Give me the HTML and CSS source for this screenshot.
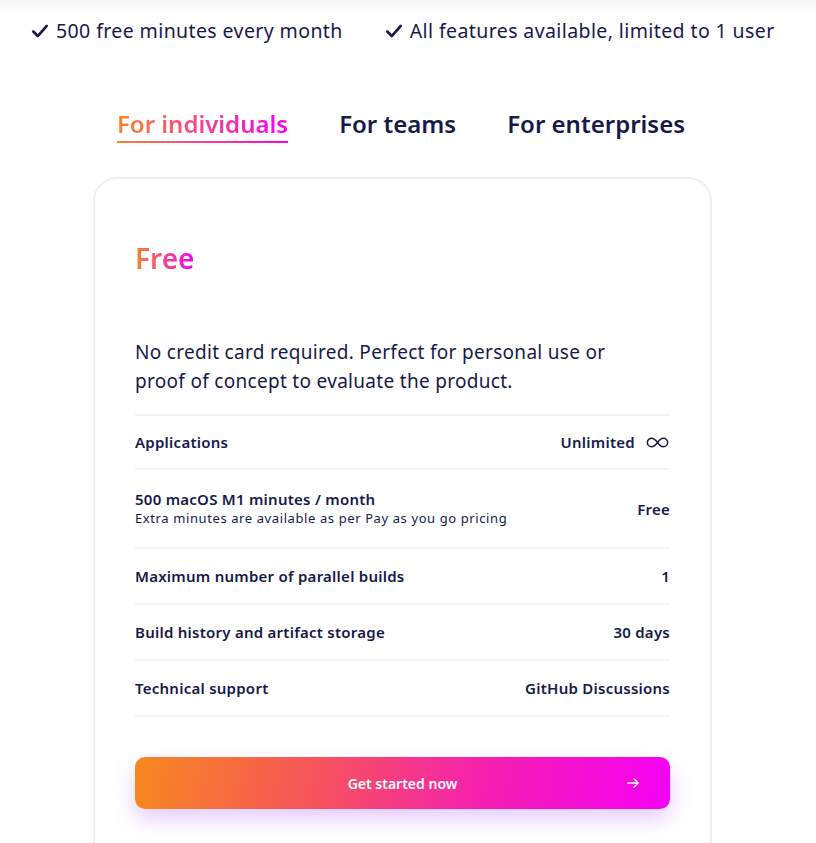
FILE: index.html
```html
<!DOCTYPE html>
<html>
<head>
<meta charset="utf-8">
<link rel="stylesheet" href="styles.css">
</head>
<body>
<div class="topshade"></div>
<ul class="perks">
  <li><svg class="check" viewBox="0 0 16 16"><path d="M2 8.5l4 4 8-9" fill="none" stroke="currentColor" stroke-width="2.4" stroke-linecap="round" stroke-linejoin="round"/></svg>500 free minutes every month</li>
  <li><svg class="check" viewBox="0 0 16 16"><path d="M2 8.5l4 4 8-9" fill="none" stroke="currentColor" stroke-width="2.4" stroke-linecap="round" stroke-linejoin="round"/></svg>All features available, limited to 1 user</li>
</ul>
<nav class="tabs">
  <a class="tab active"><span class="grad-text">For individuals</span></a>
  <a class="tab">For teams</a>
  <a class="tab">For enterprises</a>
</nav>
<section class="card">
  <h2 class="plan grad-text">Free</h2>
  <p class="desc">No credit card required. Perfect for personal use or proof of concept to evaluate the product.</p>
  <div class="rows">
    <div class="row">
      <div class="label">Applications</div>
      <div class="value">Unlimited <svg class="inf" viewBox="0 0 26 14"><path d="M13 7c-2.2-3-4-4.6-6.3-4.6A4.6 4.6 0 0 0 2.1 7a4.6 4.6 0 0 0 4.6 4.6C9 11.6 10.8 10 13 7c2.2-3 4-4.6 6.3-4.6A4.6 4.6 0 0 1 23.9 7a4.6 4.6 0 0 1-4.6 4.6C17 11.6 15.2 10 13 7z" fill="none" stroke="currentColor" stroke-width="1.6"/></svg></div>
    </div>
    <div class="row tall">
      <div class="label">500 macOS M1 minutes / month<span class="sub">Extra minutes are available as per Pay as you go pricing</span></div>
      <div class="value">Free</div>
    </div>
    <div class="row">
      <div class="label">Maximum number of parallel builds</div>
      <div class="value">1</div>
    </div>
    <div class="row">
      <div class="label">Build history and artifact storage</div>
      <div class="value">30 days</div>
    </div>
    <div class="row">
      <div class="label">Technical support</div>
      <div class="value">GitHub Discussions</div>
    </div>
  </div>
  <a class="cta"><span class="cta-text">Get started now</span><svg class="arrow" viewBox="0 0 14 12"><path d="M1 6h11M7.5 1.5L12 6l-4.5 4.5" fill="none" stroke="currentColor" stroke-width="1.6" stroke-linecap="round" stroke-linejoin="round"/></svg></a>
</section>
</body>
</html>
```
FILE: styles.css
```css
* { box-sizing: border-box; }
html, body { margin: 0; padding: 0; background: #fff; }
body {
  font-family: "Noto Sans", "Open Sans", sans-serif;
  color: #161a4a;
  width: 816px;
  height: 843px;
  overflow: hidden;
  position: relative;
}
.topshade {
  position: absolute;
  left: 0; right: 0; top: 0;
  height: 12px;
  background: linear-gradient(#f5f5f5, rgba(255,255,255,0));
}
.perks {
  list-style: none;
  margin: 0;
  padding: 17px 0 0 31px;
  display: flex;
  gap: 42px;
  font-size: 19.5px;
  line-height: 28px;
  letter-spacing: 0.4px;
}
.perks li { display: flex; align-items: center; gap: 7px; }
.check { width: 18px; height: 18px; color: #161a4a; }

.tabs {
  display: flex;
  justify-content: center;
  gap: 51px;
  margin-top: 64px;
  padding-right: 14px;
}
.tab {
  font-size: 24px;
  font-weight: 600;
  line-height: 30px;
  padding-bottom: 2px;
  color: #161a4a;
  border-bottom: 2px solid transparent;
}
.tab.active {
  border-image: linear-gradient(90deg, #f7862a, #f400f4) 1;
}
.grad-text {
  background: linear-gradient(90deg, #f7862a, #f400f4);
  -webkit-background-clip: text;
  background-clip: text;
  color: transparent;
}

.card {
  margin: 34px 0 0 93px;
  width: 619px;
  height: 700px;
  border: 2px solid #efefef;
  border-radius: 24px;
  padding: 61px 40px 0 40px;
}
.plan {
  display: inline-block;
  margin: 0;
  font-size: 28px;
  font-weight: 600;
  line-height: 36px;
}
.desc {
  margin: 62px 0 18px;
  font-size: 19px;
  line-height: 29px;
  letter-spacing: 0.3px;
  width: 500px;
}
.rows { border-top: 2px solid #f4f4f7; }
.row {
  display: flex;
  justify-content: space-between;
  align-items: center;
  height: 56px;
  border-bottom: 2px solid #f4f4f7;
  font-size: 15px;
  font-weight: 600;
  letter-spacing: 0.25px;
}
.row:first-child { height: 54px; }
.row.tall { height: 79px; }
.label { display: flex; flex-direction: column; line-height: 19px; }
.sub { font-size: 13px; font-weight: 400; margin-top: 0; line-height: 18px; letter-spacing: 0.6px; }
.value { display: flex; align-items: center; gap: 10px; }
.inf { width: 25px; height: 13px; color: #161a4a; }

.cta {
  margin-top: 40px;
  height: 52px;
  border-radius: 10px;
  background: linear-gradient(100deg, #f7891f 0%, #f6525e 35%, #f520b0 65%, #f500f5 100%);
  box-shadow: 0 10px 20px rgba(180, 110, 240, 0.35);
  display: flex;
  align-items: center;
  justify-content: center;
  position: relative;
  color: #fff;
}
.cta-text { font-size: 14px; font-weight: 600; }
.arrow {
  position: absolute;
  right: 30px;
  top: 20px;
  width: 13px;
  height: 12px;
}
```
